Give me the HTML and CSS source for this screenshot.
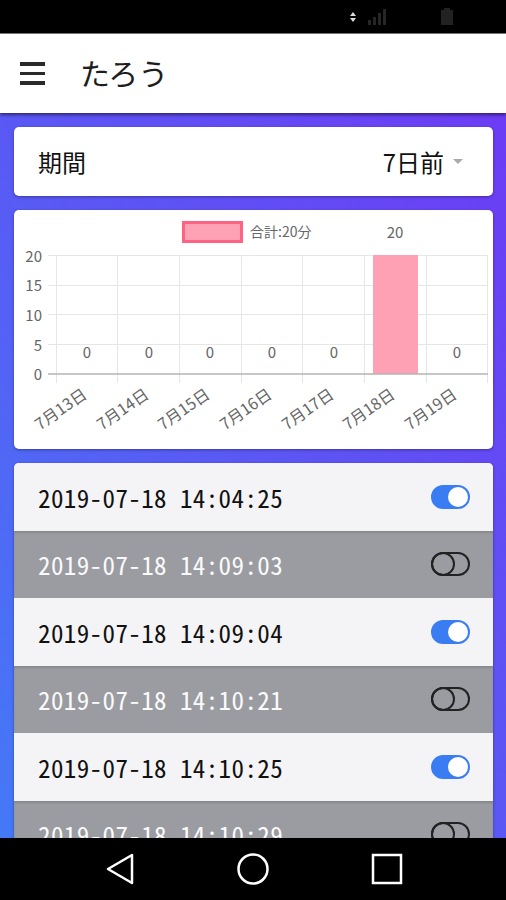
FILE: index.html
```html
<!DOCTYPE html>
<html lang="ja">
<head>
  <meta charset="UTF-8">
  <title>たろう</title>
  <link rel="stylesheet" href="styles.css">
</head>
<body>
<div class="phone">
  <div class="status-bar">
    <svg class="sb-data" width="8" height="12" viewBox="0 0 8 12"><path d="M4 1 L7 5 L1 5 Z M4 11 L7 7 L1 7 Z" fill="#ddd"/></svg>
    <svg class="sb-signal" width="20" height="16" viewBox="0 0 20 16">
      <rect x="1" y="11" width="3" height="5" fill="#262626"/>
      <rect x="6" y="8" width="3" height="8" fill="#262626"/>
      <rect x="11" y="4" width="3" height="12" fill="#262626"/>
      <rect x="16" y="0" width="3" height="16" fill="#262626"/>
    </svg>
    <svg class="sb-battery" width="12" height="17" viewBox="0 0 12 17"><rect x="3" y="0" width="6" height="2" fill="#222"/><rect x="0" y="2" width="12" height="15" fill="#222"/></svg>
  </div>

  <header class="app-header">
    <span class="menu-icon"><span></span><span></span><span></span></span>
    <h1 class="app-title">たろう</h1>
  </header>

  <main class="content">
    <section class="card period">
      <span class="period-label">期間</span>
      <span class="period-select">7日前<span class="caret"></span></span>
    </section>

    <section class="card chart-card">
      <svg width="479" height="239" viewBox="0 0 479 239">
        <!-- legend -->
        <rect x="169.5" y="12.5" width="58" height="19" fill="#ffa1b5" stroke="#ff6384" stroke-width="3"/>
        <text x="236" y="27" class="legend">合計:20分</text>

        <!-- horizontal grid -->
        <g stroke="#e6e6e6" stroke-width="1">
          <line x1="34" y1="45.5" x2="474" y2="45.5"/>
          <line x1="34" y1="75.5" x2="474" y2="75.5"/>
          <line x1="34" y1="104.5" x2="474" y2="104.5"/>
          <line x1="34" y1="134.5" x2="474" y2="134.5"/>
        </g>
        <!-- vertical grid -->
        <g stroke="#e6e6e6" stroke-width="1">
          <line x1="42.5" y1="45" x2="42.5" y2="173"/>
          <line x1="103.5" y1="45" x2="103.5" y2="173"/>
          <line x1="165.5" y1="45" x2="165.5" y2="173"/>
          <line x1="227.5" y1="45" x2="227.5" y2="173"/>
          <line x1="288.5" y1="45" x2="288.5" y2="173"/>
          <line x1="350.5" y1="45" x2="350.5" y2="173"/>
          <line x1="412.5" y1="45" x2="412.5" y2="173"/>
          <line x1="473.5" y1="45" x2="473.5" y2="173"/>
        </g>

        <rect x="359" y="45" width="45" height="119" fill="#ffa1b5"/>
        <line x1="34" y1="164" x2="474" y2="164" stroke="#b3b3b3" stroke-width="1.5"/>

        <!-- y axis -->
        <g class="tick" text-anchor="end">
          <text x="28" y="52">20</text>
          <text x="28" y="81">15</text>
          <text x="28" y="111">10</text>
          <text x="28" y="141">5</text>
          <text x="28" y="170">0</text>
        </g>

        <!-- values -->
        <g class="tick" text-anchor="middle">
          <text x="73" y="148">0</text>
          <text x="135" y="148">0</text>
          <text x="196" y="148">0</text>
          <text x="258" y="148">0</text>
          <text x="320" y="148">0</text>
          <text x="381" y="28">20</text>
          <text x="443" y="148">0</text>
        </g>

        <!-- x axis -->
        <g class="tick x-tick" text-anchor="end">
          <text transform="translate(74 187) rotate(-35)">7月13日</text>
          <text transform="translate(136 187) rotate(-35)">7月14日</text>
          <text transform="translate(197 187) rotate(-35)">7月15日</text>
          <text transform="translate(259 187) rotate(-35)">7月16日</text>
          <text transform="translate(321 187) rotate(-35)">7月17日</text>
          <text transform="translate(382 187) rotate(-35)">7月18日</text>
          <text transform="translate(444 187) rotate(-35)">7月19日</text>
        </g>
      </svg>
    </section>

    <section class="card log-list">
      <div class="log-row"><span class="log-time">2019-07-18 14:04:25</span><span class="toggle toggle-on"></span></div>
      <div class="log-row log-off"><span class="log-time">2019-07-18 14:09:03</span><span class="toggle"></span></div>
      <div class="log-row"><span class="log-time">2019-07-18 14:09:04</span><span class="toggle toggle-on"></span></div>
      <div class="log-row log-off"><span class="log-time">2019-07-18 14:10:21</span><span class="toggle"></span></div>
      <div class="log-row"><span class="log-time">2019-07-18 14:10:25</span><span class="toggle toggle-on"></span></div>
      <div class="log-row log-off"><span class="log-time">2019-07-18 14:10:29</span><span class="toggle"></span></div>
    </section>
  </main>

  <nav class="nav-bar">
    <svg width="30" height="32" viewBox="0 0 30 32"><path d="M27 2 L27 30 L3 16 Z" fill="none" stroke="#fff" stroke-width="2.5" stroke-linejoin="round"/></svg>
    <svg width="34" height="34" viewBox="0 0 34 34"><circle cx="17" cy="17" r="14.5" fill="none" stroke="#fff" stroke-width="2.5"/></svg>
    <svg width="32" height="32" viewBox="0 0 32 32"><rect x="2" y="2" width="28" height="28" fill="none" stroke="#fff" stroke-width="2.5"/></svg>
  </nav>
</div>
</body>
</html>
```

FILE: styles.css
```css
body {
  margin: 0;
  background: #000;
  font-family: "Noto Sans CJK JP", sans-serif;
}
.phone {
  width: 506px;
  height: 900px;
  display: flex;
  flex-direction: column;
  overflow: hidden;
}
.status-bar {
  height: 33px;
  background: #000;
  border-bottom: 1px solid #777;
  display: flex;
  align-items: center;
  padding-left: 349px;
  gap: 10px;
}
.sb-battery {
  margin-left: 44px;
}
.app-header {
  height: 79px;
  background: #fff;
  display: flex;
  align-items: center;
  padding-left: 20px;
  box-shadow: 0 2px 3px rgba(0, 0, 0, 0.5);
  position: relative;
  z-index: 2;
}
.menu-icon {
  display: flex;
  flex-direction: column;
  gap: 6px;
  width: 25px;
}
.menu-icon span {
  height: 3.5px;
  background: #2a2a2a;
}
.app-title {
  margin: 0 0 4px 35px;
  font-size: 30px;
  font-weight: 400;
  color: #1e1e1e;
}
.content {
  flex: 1;
  min-height: 0;
  overflow: hidden;
  background: linear-gradient(to top right, #4479f6 0%, #5a58f4 50%, #6c3cf5 100%);
  padding: 14px 13px 0 14px;
  display: flex;
  flex-direction: column;
  gap: 14px;
}
.card {
  background: #fff;
  border-radius: 5px;
  box-shadow: 0 1px 3px rgba(0, 0, 0, 0.35);
  flex-shrink: 0;
}
.period {
  height: 69px;
  display: flex;
  align-items: center;
  justify-content: space-between;
  padding: 0 30px 0 24px;
  font-size: 24px;
  color: #111;
}
.period-select {
  display: flex;
  align-items: center;
}
.caret {
  width: 0;
  height: 0;
  margin-left: 9px;
  border-left: 5.5px solid transparent;
  border-right: 5.5px solid transparent;
  border-top: 5.5px solid #aaa;
}
.chart-card {
  height: 239px;
}
.chart-card svg {
  display: block;
}
.legend {
  font-size: 14px;
  fill: #666;
}
.tick {
  font-size: 15px;
  fill: #666;
}
.x-tick {
  font-size: 16px;
}
.log-list {
  overflow: hidden;
  border-radius: 5px 5px 0 0;
}
.log-row {
  height: 67.5px;
  display: flex;
  align-items: center;
  justify-content: space-between;
  padding: 0 23px 0 24px;
  background: #f4f4f6;
  color: #111;
}
.log-off {
  background: #9b9ca1;
  color: #fafafa;
  box-shadow: inset 0 2px 2px rgba(0, 0, 0, 0.12);
}
.log-time {
  font-family: "Noto Sans Mono CJK JP", "Noto Sans CJK JP", monospace;
  font-feature-settings: "hwid" 1;
  font-size: 25px;
  letter-spacing: 0.4px;
}
.toggle {
  width: 39px;
  height: 24px;
  box-sizing: border-box;
  border: 2px solid #222;
  border-radius: 12px;
  position: relative;
}
.toggle::after {
  content: "";
  position: absolute;
  top: -2px;
  left: -2px;
  width: 24px;
  height: 24px;
  box-sizing: border-box;
  border: 2px solid #222;
  border-radius: 50%;
}
.toggle-on {
  background: #3a7df3;
  border-color: #3a7df3;
}
.toggle-on::after {
  left: auto;
  right: 0;
  top: 0;
  width: 20px;
  height: 20px;
  border: none;
  background: #fff;
}
.nav-bar {
  height: 62px;
  background: #000;
  flex-shrink: 0;
  display: flex;
  align-items: center;
  padding-left: 105px;
  gap: 101px;
}
```
